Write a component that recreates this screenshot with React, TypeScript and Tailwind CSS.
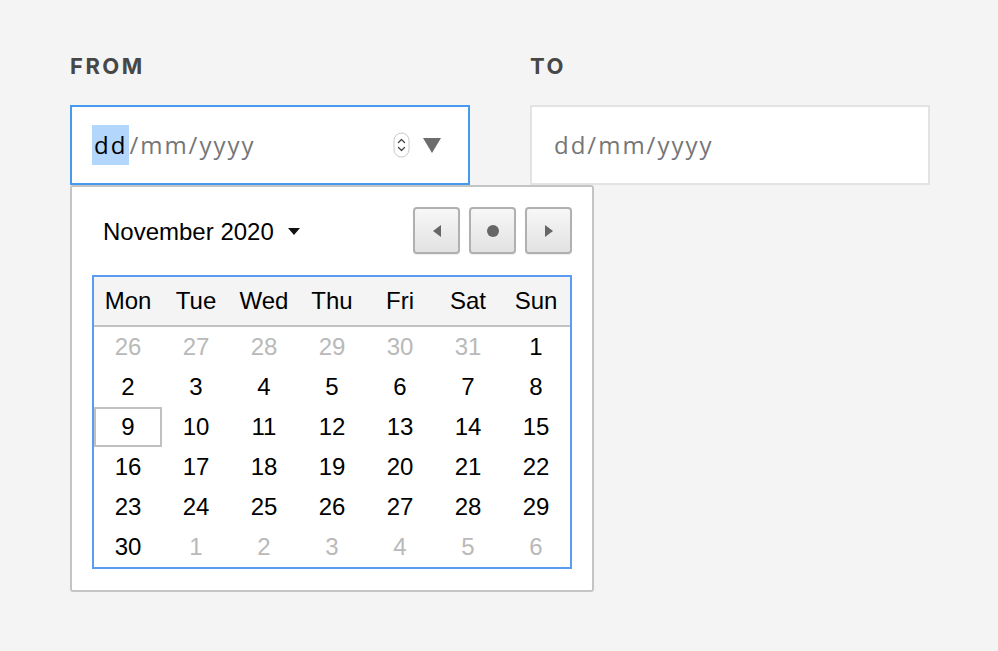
import React from "react";

const weeks: { d: number; out?: boolean; focus?: boolean }[][] = [
  [26, 27, 28, 29, 30, 31].map((d) => ({ d, out: true })).concat([{ d: 1 }]),
  [2, 3, 4, 5, 6, 7, 8].map((d) => ({ d })),
  [9, 10, 11, 12, 13, 14, 15].map((d) => ({ d, focus: d === 9 })),
  [16, 17, 18, 19, 20, 21, 22].map((d) => ({ d })),
  [23, 24, 25, 26, 27, 28, 29].map((d) => ({ d })),
  [{ d: 30 }].concat([1, 2, 3, 4, 5, 6].map((d) => ({ d, out: true }))),
];

const days = ["Mon", "Tue", "Wed", "Thu", "Fri", "Sat", "Sun"];

function NavButton({ children }: { children: React.ReactNode }) {
  return (
    <div className="w-[47px] h-[47px] border-2 border-[#b0b0b0] rounded-[4px] bg-gradient-to-b from-[#f7f7f7] to-[#e2e2e2] flex items-center justify-center shadow-[0_1px_1px_rgba(0,0,0,0.08)]">
      {children}
    </div>
  );
}

export default function App() {
  return (
    <div className="w-[998px] h-[651px] bg-[#f4f4f4] pl-[70px] pt-[54px] flex gap-[60px]" style={{ fontFamily: "Inter, 'Open Sans', sans-serif" }}>
      <div className="relative w-[400px] flex flex-col">
        <div className="h-[24px] leading-[24px] text-[22px] font-bold tracking-[2.5px] text-[#474747]">FROM</div>
        <div className="mt-[27px] h-[80px] bg-white border-2 border-[#4599ef] flex items-center pl-[20px] pr-[27px]">
          <div className="text-[24px] tracking-[2px] text-[#767676] flex items-center" style={{ fontFamily: "'Open Sans', sans-serif" }}>
            <span className="bg-[#b3d6fd] text-black h-[40px] leading-[40px] px-[2px]">dd</span>
            <span>/mm/yyyy</span>
          </div>
          <div className="flex-1" />
          <svg width="17" height="26" viewBox="0 0 17 26" className="mr-[13px]">
            <rect x="1" y="1" width="15" height="24" rx="7.5" fill="white" stroke="#c8c8c8" strokeWidth="1" />
            <path d="M5.5 10.5 L8.5 7.5 L11.5 10.5" fill="none" stroke="#444" strokeWidth="1.3" strokeLinecap="round" strokeLinejoin="round" />
            <path d="M5.5 15.5 L8.5 18.5 L11.5 15.5" fill="none" stroke="#444" strokeWidth="1.3" strokeLinecap="round" strokeLinejoin="round" />
          </svg>
          <svg width="18" height="15" viewBox="0 0 18 15">
            <path d="M0 0 L18 0 L9 15 Z" fill="#6d6d6d" />
          </svg>
        </div>

        <div className="absolute left-0 top-[131px] w-[524px] bg-white border-2 border-[#c4c4c4] rounded-[3px] p-[20px] pb-[21px]" style={{ fontFamily: "'Liberation Sans', Arial, sans-serif" }}>
          <div className="h-[47px] flex items-center">
            <div className="pl-[11px] pt-[2px] text-[24px] text-black flex items-center">
              <span>November 2020</span>
              <svg width="12" height="7" viewBox="0 0 12 7" className="ml-[14px]">
                <path d="M0 0 L12 0 L6 7 Z" fill="#111" />
              </svg>
            </div>
            <div className="flex-1" />
            <div className="flex gap-[9px]">
              <NavButton>
                <svg width="8" height="12" viewBox="0 0 8 12">
                  <path d="M8 0 L8 12 L0 6 Z" fill="#666" />
                </svg>
              </NavButton>
              <NavButton>
                <svg width="12" height="12" viewBox="0 0 12 12">
                  <circle cx="6" cy="6" r="6" fill="#666" />
                </svg>
              </NavButton>
              <NavButton>
                <svg width="8" height="12" viewBox="0 0 8 12">
                  <path d="M0 0 L0 12 L8 6 Z" fill="#666" />
                </svg>
              </NavButton>
            </div>
          </div>
          <div className="mt-[21px] border-2 border-[#5b9cf0]">
            <div className="grid grid-cols-7 h-[50px] bg-[#f4f4f4] border-b-2 border-[#c2c2c2] items-center">
              {days.map((d) => (
                <div key={d} className="text-center text-[24px] leading-[28px] text-black">{d}</div>
              ))}
            </div>
            {weeks.map((w, i) => (
              <div key={i} className="grid grid-cols-7 h-[40px]">
                {w.map((c, j) => (
                  <div
                    key={j}
                    className={
                      "flex items-center justify-center text-[24px] leading-[28px] " +
                      (c.out ? "text-[#b9b9b9] " : "text-black ") +
                      (c.focus ? "border-2 border-[#c0c0c0]" : "")
                    }
                  >
                    {c.d}
                  </div>
                ))}
              </div>
            ))}
          </div>
        </div>
      </div>

      <div className="w-[400px] flex flex-col">
        <div className="h-[24px] leading-[24px] text-[22px] font-bold tracking-[2.5px] text-[#474747]">TO</div>
        <div className="mt-[27px] h-[80px] bg-white border-2 border-[#e3e3e3] flex items-center pl-[22px]">
          <div className="text-[24px] tracking-[2px] text-[#767676]" style={{ fontFamily: "'Open Sans', sans-serif" }}>dd/mm/yyyy</div>
        </div>
      </div>
    </div>
  );
}
